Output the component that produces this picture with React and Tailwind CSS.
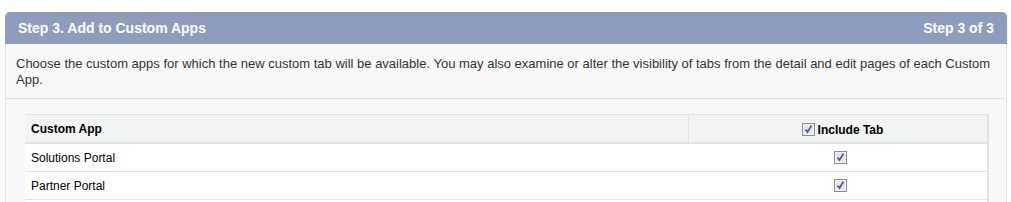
function Check() {
  return (
    <svg width="13" height="13" viewBox="0 0 13 13" className="block">
      <rect x="0.5" y="0.5" width="12" height="12" fill="#dcdcdc" stroke="#8c8c8c" />
      <rect x="1.5" y="1.5" width="10" height="10" fill="#e6e6e6" stroke="#f4f4f4" />
      <path d="M3.5 6.5 L5.5 9 L9.5 2.5" fill="none" stroke="#4a5a9c" strokeWidth="1.6" />
    </svg>
  );
}

const apps = ["Solutions Portal", "Partner Portal", ""];

export default function App() {
  return (
    <div
      className="w-[1011px] h-[202px] overflow-hidden bg-white pt-3 pl-[5px] pr-[4px] text-[#000]"
      style={{ fontFamily: '"Liberation Sans", Arial, sans-serif' }}
    >
      <div className="bg-[#f8f8f8] border-x border-[#e4e4e4] rounded-t-[5px] h-[300px]">
        <div className="-mx-px flex items-center justify-between h-[32px] rounded-t-[5px] bg-[#8e9dbe] px-[13px] text-white font-bold text-[14px]">
          <span>Step 3. Add to Custom Apps</span>
          <span>Step 3 of 3</span>
        </div>
        <div className="pl-[10px] pr-[8px] pt-[12px] pb-[10px] text-[13px] leading-[16px] text-[#333] border-b border-[#e0e0e0]">
          Choose the custom apps for which the new custom tab will be available. You may also examine or alter the visibility of tabs from the detail and edit pages of each Custom App.
        </div>
        <div className="pt-[15px] pl-[19px] pr-[17px]">
          <div className="border-t border-r-2 border-[#e0e3e5] bg-white">
            <div className="flex h-[29px] bg-[#f2f3f3] border-b-2 border-[#e0e3e5] text-[12px] font-bold">
              <div className="w-[664px] border-r border-[#e0e3e5] pl-[6px] flex items-center">Custom App</div>
              <div className="flex-1 flex items-center justify-center gap-[3px] pt-[2px] pl-[9px]">
                <Check />
                <span>Include Tab</span>
              </div>
            </div>
            {apps.map((a, i) => (
              <div key={i} className="flex h-[28px] border-b border-[#e3e3e3] text-[12px]">
                <div className="w-[664px] pl-[6px] flex items-center">{a}</div>
                <div className="flex-1 flex items-center justify-center pl-[4px]">{a && <Check />}</div>
              </div>
            ))}
          </div>
        </div>
      </div>
    </div>
  );
}
